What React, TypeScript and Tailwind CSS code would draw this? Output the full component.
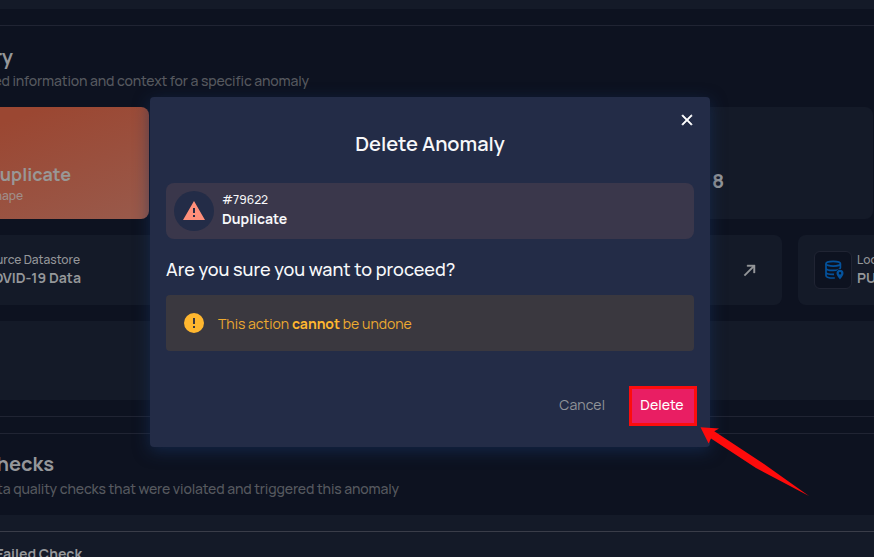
import React from "react";

const font = { fontFamily: 'Manrope, Inter, "Noto Sans", sans-serif' };

function Icon({ d, size, className }: { d: string; size: number; className?: string }) {
  return (
    <svg viewBox="0 0 24 24" width={size} height={size} fill="currentColor" className={className}>
      <path d={d} />
    </svg>
  );
}

const closePath =
  "M19,6.41L17.59,5L12,10.59L6.41,5L5,6.41L10.59,12L5,17.59L6.41,19L12,13.41L17.59,19L19,17.59L13.41,12L19,6.41Z";
const alertPath = "M13 14H11V9H13M13 18H11V16H13M1 21H23L12 2L1 21Z";
const alertCirclePath =
  "M13,13H11V7H13M13,17H11V15H13M12,2A10,10 0 0,0 2,12A10,10 0 0,0 12,22A10,10 0 0,0 22,12A10,10 0 0,0 12,2Z";
const arrowPath = "M5,17.59L15.59,7H9V5H19V15H17V8.41L6.41,19L5,17.59Z";

function DatabasePin() {
  return (
    <svg width="20" height="20" viewBox="0 0 20 20" fill="none" stroke="#04529c" strokeWidth="1.7">
      <ellipse cx="9.2" cy="3.7" rx="7.2" ry="2.4" />
      <path d="M2 3.7v11.7c0 1.5 3 2.6 7.2 2.6h1.6M16.4 3.7v4M2 7.9c0 1.5 3 2.5 7.2 2.5 3.7 0 7.2-1 7.2-2.9M2 12c0 1.4 3 2.4 7.2 2.4h.8" />
      <path
        d="M16 9.8a3.5 3.5 0 0 0-3.5 3.5c0 2.6 3.5 6.1 3.5 6.1s3.5-3.5 3.5-6.1A3.5 3.5 0 0 0 16 9.8Zm0 4.7a1.2 1.2 0 1 1 0-2.4 1.2 1.2 0 0 1 0 2.4Z"
        fill="#04529c"
        stroke="#0d1220"
        strokeWidth="1.6"
        paintOrder="stroke"
      />
    </svg>
  );
}

function Page() {
  return (
    <div className="flex h-[557px] w-[874px] flex-col overflow-hidden bg-[#0d1220] text-[#95979a]">
      <div className="h-[9px] shrink-0 bg-[#141a28]" />
      <section className="mt-4 h-[392px] shrink-0 border-t border-b border-[#202433]">
        <div className="flex h-[62px] w-[309px] flex-col items-end whitespace-nowrap pt-[19px]">
          <h2 className="mr-[296px] text-[20px] leading-6 font-bold">Summary</h2>
          <p className="mt-[2px] text-[14px] leading-5 font-medium tracking-[-0.14px] text-[#56595f]">
            Detailed information and context for a specific anomaly
          </p>
        </div>
        <div className="mt-[19px] flex h-28">
          <div className="w-[149px] shrink-0 rounded-r-lg bg-linear-[160deg,#9b4732_10%,#99594a_95%]">
            <div className="flex w-[71px] flex-col items-end whitespace-nowrap pt-[57px]">
              <div className="text-[18px] leading-5 font-bold text-[#999796]">Duplicate</div>
              <div className="mt-1 mr-12 text-[12px] leading-4 font-medium text-[#a08f8a]">Shape</div>
            </div>
          </div>
          <div className="ml-4 flex w-[708px] shrink-0 items-center rounded-lg bg-[#141a28] pt-[36px] pl-[547px]">
            <span className="text-[20px] leading-6 font-bold">8</span>
          </div>
        </div>
        <div className="mt-4 flex h-[70px] gap-4">
          <div className="flex w-[782px] shrink-0 items-center justify-between rounded-r-lg bg-[#141a28] pr-[23px]">
            <div className="flex w-[81px] flex-col items-end whitespace-nowrap">
              <div className="mr-px text-[12px] leading-4 font-medium">Source Datastore</div>
              <div className="text-[14px] leading-5 font-bold">COVID-19 Data</div>
            </div>
            <Icon d={arrowPath} size={19} className="stroke-current stroke-[0.5]" />
          </div>
          <div className="flex w-[200px] shrink-0 items-center rounded-lg bg-[#141a28] pl-4">
            <div className="flex size-[38px] items-center justify-center rounded-md border border-[#202433] bg-[#0d1220] pl-px">
              <DatabasePin />
            </div>
            <div className="ml-[5px] whitespace-nowrap">
              <div className="text-[12px] leading-4 font-medium">Location</div>
              <div className="text-[14px] leading-5 font-bold">PUBLIC</div>
            </div>
          </div>
        </div>
        <div className="mt-4 h-[79px] bg-[#141a28]" />
      </section>
      <section className="mt-4 shrink-0 border-t border-[#202433]">
        <div className="flex h-[81px] w-[399px] flex-col items-end whitespace-nowrap pt-[18px]">
          <h2 className="mr-[345px] text-[20px] leading-6 font-bold">Failed Checks</h2>
          <p className="mt-[3px] text-[14px] leading-5 font-medium tracking-[-0.13px] text-[#56595f]">
            Data quality checks that were violated and triggered this anomaly
          </p>
        </div>
        <div className="h-[43px] bg-[#141a28] pt-4">
          <div className="flex w-full border-t border-[#3a3d49] pt-3">
            <span className="-ml-[4px] text-[14px] leading-5 font-bold">Failed Check</span>
          </div>
        </div>
      </section>
    </div>
  );
}

function DeleteDialog() {
  return (
    <div
      role="dialog"
      className="absolute top-[97px] left-[150px] flex h-[350px] w-[560px] flex-col rounded bg-[#232c47] px-4 text-[#f7f8fa] shadow-[0_4px_16px_#17325ea0]"
    >
      <div className="-mr-[2px] flex h-[32px] items-end justify-end pb-[0.5px]">
        <Icon d={closePath} size={18} className="stroke-white stroke-[0.8] text-white" />
      </div>
      <h1 className="mt-0.5 text-center text-[20px] leading-[26px] font-semibold">Delete Anomaly</h1>
      <div className="mt-[26px] flex h-14 shrink-0 items-center rounded-lg bg-[#3a374b] pl-2">
        <div className="flex size-10 items-center justify-center rounded-full bg-[#232c47] text-[#ff8f7a]">
          <Icon d={alertPath} size={24} />
        </div>
        <div className="ml-2">
          <div className="text-[12px] leading-4 font-medium">#79622</div>
          <div className="mt-px mb-px text-[14px] leading-5 font-bold">Duplicate</div>
        </div>
      </div>
      <p className="mt-[17px] mb-px text-[18px] leading-[26px] font-medium">Are you sure you want to proceed?</p>
      <div className="mt-3 flex h-14 shrink-0 items-center rounded bg-[#3a383f] pl-4 text-[14px] text-[#ffb72f]">
        <Icon d={alertCirclePath} size={24} />
        <span className="ml-3 text-[#edaa30]">
          This action <b className="font-bold text-[#ffb72f]">cannot</b> be undone
        </span>
      </div>
      <div className="-mr-[3px] mt-[35px] flex items-center justify-end">
        <button className="-mt-[3px] text-[14px] tracking-[0.1px] text-[#919499]">Cancel</button>
        <button className="ml-6 h-10 w-[68px] border-[3px] border-[#fc0d0d] bg-[#e91e63] pr-[2px] pb-[3px] text-[14px] font-medium text-white">
          Delete
        </button>
      </div>
    </div>
  );
}

export default function App() {
  return (
    <main className="relative h-[557px] w-[874px] overflow-hidden" style={font}>
      <Page />
      <DeleteDialog />
      <svg className="absolute top-[420px] left-[695px]" width="120" height="80" viewBox="695 420 120 80">
        <path d="M700.5 427.3 L719 428.5 L714.3 431.2 L764 464 L809 496 L756 468 L711 438.6 L708.6 443.5Z" fill="#fe0b0b" />
      </svg>
    </main>
  );
}
